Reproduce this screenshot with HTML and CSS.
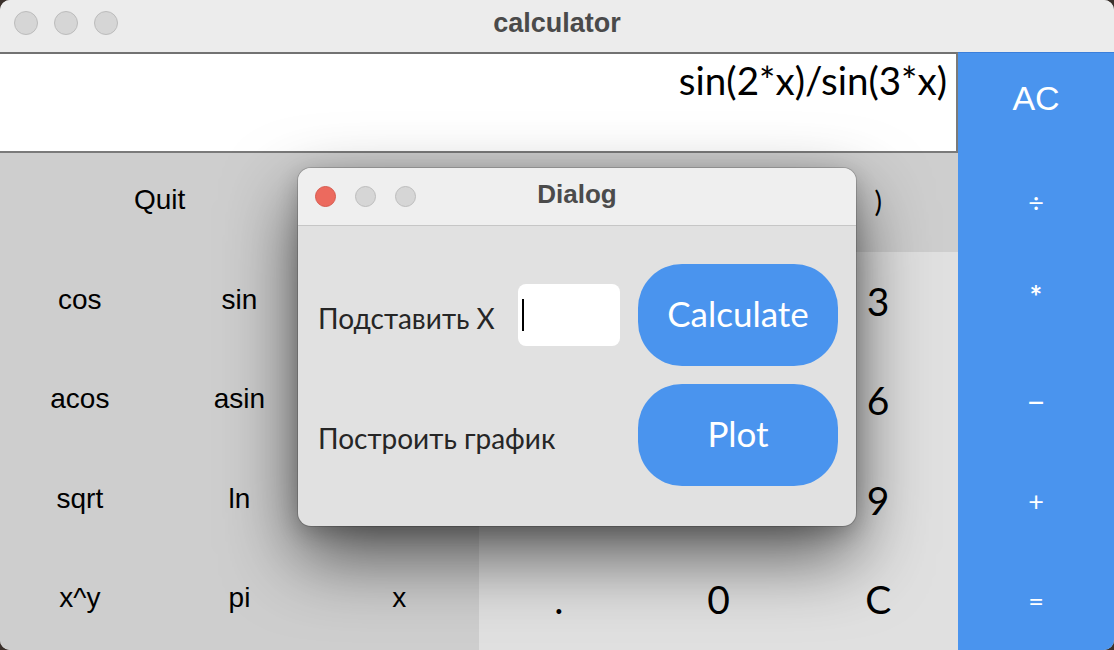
FILE: index.html
```html
<!DOCTYPE html>
<html lang="ru">
<head>
<meta charset="utf-8">
<title>calculator</title>
<link rel="stylesheet" href="styles.css">
</head>
<body>
<div class="window">
  <div class="titlebar">
    <div class="lights">
      <span class="light"></span><span class="light"></span><span class="light"></span>
    </div>
    <div class="title">calculator</div>
  </div>
  <div class="main">
    <div class="display"><span class="expr">sin(2*x)/sin(3*x)</span></div>
    <div class="ac">AC</div>
    <div class="keys">
      <div class="key fn wide">Quit</div>
      <div class="key fn"></div>
      <div class="key fn"></div>
      <div class="key fn"></div>
      <div class="key fn digitfont paren">)</div>

      <div class="key fn">cos</div>
      <div class="key fn">sin</div>
      <div class="key fn"></div>
      <div class="key num"></div>
      <div class="key num"></div>
      <div class="key num">3</div>

      <div class="key fn">acos</div>
      <div class="key fn">asin</div>
      <div class="key fn"></div>
      <div class="key num"></div>
      <div class="key num"></div>
      <div class="key num">6</div>

      <div class="key fn">sqrt</div>
      <div class="key fn">ln</div>
      <div class="key fn"></div>
      <div class="key num"></div>
      <div class="key num"></div>
      <div class="key num">9</div>

      <div class="key fn">x^y</div>
      <div class="key fn">pi</div>
      <div class="key fn">x</div>
      <div class="key num">.</div>
      <div class="key num">0</div>
      <div class="key num">C</div>
    </div>
    <div class="ops">
      <div class="op">÷</div>
      <div class="op star">*</div>
      <div class="op minus">−</div>
      <div class="op">+</div>
      <div class="op">=</div>
    </div>
  </div>

  <div class="dialog">
    <div class="dtitlebar">
      <div class="dlights">
        <span class="dlight red"></span><span class="dlight"></span><span class="dlight"></span>
      </div>
      <div class="dtitle">Dialog</div>
    </div>
    <div class="dbody">
      <div class="dlabel">Подставить X</div>
      <div class="dinput"><span class="caret"></span></div>
      <div class="dbtn">Calculate</div>
      <div class="dlabel span2">Построить график</div>
      <div class="dbtn">Plot</div>
    </div>
  </div>
</div>
</body>
</html>
```

FILE: styles.css
```css
* { box-sizing: border-box; }
html, body { margin: 0; padding: 0; }
body {
  width: 1114px;
  height: 650px;
  background: #3a302b;
  overflow: hidden;
}
.window {
  position: relative;
  width: 1114px;
  height: 650px;
  border-radius: 10px;
  overflow: hidden;
  background: #cfcfcf;
  display: flex;
  flex-direction: column;
}
.titlebar {
  height: 52px;
  flex: none;
  background: #ececec;
  position: relative;
  display: flex;
  align-items: center;
  justify-content: center;
}
.lights {
  position: absolute;
  left: 14px;
  top: 11px;
  display: flex;
  gap: 16px;
}
.light {
  width: 24px;
  height: 24px;
  border-radius: 50%;
  background: #d6d6d6;
  border: 1px solid #bcbcbc;
}
.title {
  font-family: "Liberation Sans", Arial, sans-serif;
  font-weight: bold;
  font-size: 27px;
  color: #4a4a4a;
  margin-top: -6px;
}
.main {
  flex: 1;
  display: grid;
  grid-template-columns: 958px 156px;
  grid-template-rows: 101px 1fr;
}
.display {
  background: #ffffff;
  border-top: 2px solid #727272;
  border-bottom: 2px solid #7a7a7a;
  border-right: 2px solid #7a7a7a;
  display: flex;
  justify-content: flex-end;
  align-items: flex-start;
  padding: 3px 9px 0 0;
}
.expr {
  font-family: Lato, "Noto Sans", sans-serif;
  font-size: 38.6px;
  color: #000;
  line-height: 46px;
}
.ac {
  background: #4a94ee;
  border-top: 1px solid #3b7fdb;
  color: #fff;
  font-family: "Liberation Sans", Arial, sans-serif;
  font-size: 34px;
  display: flex;
  align-items: center;
  justify-content: center;
  padding-bottom: 9px;
}
.keys {
  display: grid;
  grid-template-columns: repeat(6, 1fr);
  grid-template-rows: repeat(5, 1fr);
}
.key {
  display: flex;
  align-items: center;
  justify-content: center;
  color: #000;
}
.fn {
  background: #cecece;
  font-family: "Liberation Sans", Arial, sans-serif;
  font-size: 28px;
  padding-bottom: 4px;
}
.wide { grid-column: span 2; padding-bottom: 6px; }
.num {
  background: #e0e0e0;
  font-family: Lato, "Noto Sans", sans-serif;
  font-size: 39px;
  padding-bottom: 2px;
}
.digitfont { font-family: Lato, "Noto Sans", sans-serif; }
.paren { font-size: 28px; }
.ops {
  background: #4a94ee;
  display: grid;
  grid-template-rows: repeat(5, 1fr);
}
.op {
  display: flex;
  align-items: center;
  justify-content: center;
  color: #fff;
  font-family: Lato, "Noto Sans", sans-serif;
  font-size: 27px;
}
.op.star { font-size: 30px; padding-bottom: 12px; font-weight: bold; }
.op.minus { font-size: 32px; }

/* Dialog overlay */
.dialog {
  position: absolute;
  left: 298px;
  top: 168px;
  width: 558px;
  height: 358px;
  border-radius: 13px;
  background: #e1e1e1;
  overflow: hidden;
  box-shadow: 0 0 0 1px rgba(0,0,0,0.16), 0 30px 72px rgba(0,0,0,0.62), 0 6px 22px rgba(0,0,0,0.2);
  display: flex;
  flex-direction: column;
}
.dtitlebar {
  height: 58px;
  flex: none;
  background: #efefef;
  border-bottom: 1px solid #c6c6c6;
  position: relative;
  display: flex;
  align-items: center;
  justify-content: center;
}
.dlights {
  position: absolute;
  left: 17px;
  top: 18px;
  display: flex;
  gap: 19px;
}
.dlight {
  width: 21px;
  height: 21px;
  border-radius: 50%;
  background: #d6d6d6;
  border: 1px solid #bdbdbd;
}
.dlight.red {
  background: #ec6a5e;
  border-color: #d65a4e;
}
.dtitle {
  font-family: "Liberation Sans", Arial, sans-serif;
  font-weight: bold;
  font-size: 26px;
  color: #4b4b4b;
  margin-top: -4px;
}
.dbody {
  flex: 1;
  display: grid;
  grid-template-columns: 182px 102px 200px;
  grid-template-rows: 102px 102px;
  column-gap: 18px;
  row-gap: 18px;
  padding: 38px 0 0 20px;
  align-items: center;
}
.dlabel {
  font-family: Lato, "Noto Sans", sans-serif;
  font-size: 28px;
  color: #262626;
  white-space: nowrap;
  padding-top: 6px;
}
.span2 { grid-column: span 2; }
.dinput {
  height: 62px;
  background: #fff;
  border-radius: 8px;
  display: flex;
  align-items: center;
  padding-left: 4px;
}
.caret {
  width: 2px;
  height: 32px;
  background: #000;
}
.dbtn {
  height: 102px;
  border-radius: 44px;
  background: #4a94ee;
  color: #fff;
  font-family: Lato, "Noto Sans", sans-serif;
  font-size: 35px;
  display: flex;
  align-items: center;
  justify-content: center;
  padding-bottom: 4px;
}
```
